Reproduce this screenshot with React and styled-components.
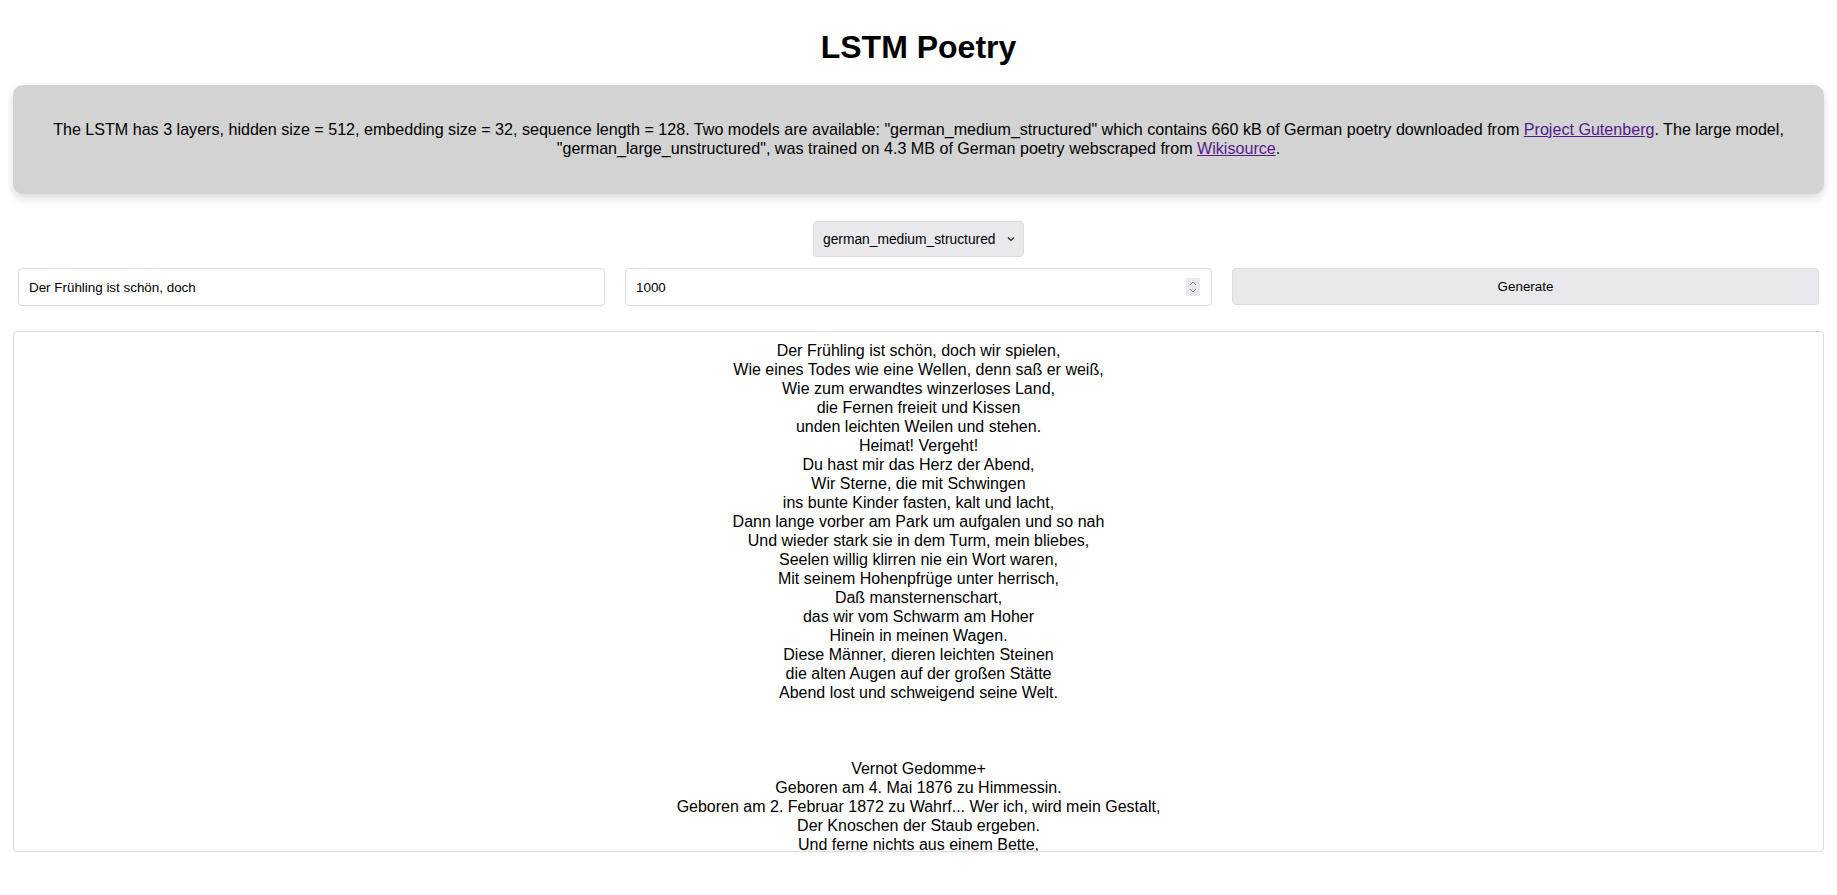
import React, { useState } from "react";
import styled, { createGlobalStyle } from "styled-components";

const poem = [
  "Der Frühling ist schön, doch wir spielen,",
  "Wie eines Todes wie eine Wellen, denn saß er weiß,",
  "Wie zum erwandtes winzerloses Land,",
  "die Fernen freieit und Kissen",
  "unden leichten Weilen und stehen.",
  "Heimat! Vergeht!",
  "Du hast mir das Herz der Abend,",
  "Wir Sterne, die mit Schwingen",
  "ins bunte Kinder fasten, kalt und lacht,",
  "Dann lange vorber am Park um aufgalen und so nah",
  "Und wieder stark sie in dem Turm, mein bliebes,",
  "Seelen willig klirren nie ein Wort waren,",
  "Mit seinem Hohenpfrüge unter herrisch,",
  "Daß mansternenschart,",
  "das wir vom Schwarm am Hoher",
  "Hinein in meinen Wagen.",
  "Diese Männer, dieren leichten Steinen",
  "die alten Augen auf der großen Stätte",
  "Abend lost und schweigend seine Welt.",
  "",
  "",
  "",
  "Vernot Gedomme+",
  "Geboren am 4. Mai 1876 zu Himmessin.",
  "Geboren am 2. Februar 1872 zu Wahrf... Wer ich, wird mein Gestalt,",
  "Der Knoschen der Staub ergeben.",
  "Und ferne nichts aus einem Bette,",
].join("\n");

const App = () => {
  const [model, setModel] = useState("german_medium_structured");
  const [prompt, setPrompt] = useState("Der Frühling ist schön, doch");
  const [length, setLength] = useState(1000);

  return (
    <>
      <GlobalStyle />
      <Title>LSTM Poetry</Title>
      <InfoCard>
        The LSTM has 3 layers, hidden size = 512, embedding size = 32, sequence
        length = 128. Two models are available: "german_medium_structured" which
        contains 660 kB of German poetry downloaded from{" "}
        <Link href="#">Project Gutenberg</Link>. The large model,
        "german_large_unstructured", was trained on 4.3 MB of German poetry
        webscraped from <Link href="#">Wikisource</Link>.
      </InfoCard>
      <SelectRow>
        <SelectWrap>
          <Select value={model} onChange={(e) => setModel(e.target.value)}>
            <option value="german_medium_structured">german_medium_structured</option>
            <option value="german_large_unstructured">german_large_unstructured</option>
          </Select>
          <Chevron width="10" height="10" viewBox="0 0 10 10">
            <path d="M2 3.5 L5 6.5 L8 3.5" fill="none" stroke="#222" strokeWidth="1.2" />
          </Chevron>
        </SelectWrap>
      </SelectRow>
      <ControlRow>
        <Field>
          <TextInput value={prompt} onChange={(e) => setPrompt(e.target.value)} />
        </Field>
        <Field>
          <TextInput
            type="number"
            value={length}
            onChange={(e) => setLength(e.target.value)}
          />
          <Spinner width="14" height="18" viewBox="0 0 14 18">
            <path d="M4 7 L7 4 L10 7" fill="none" stroke="#8a8a8a" strokeWidth="1" />
            <path d="M4 11 L7 14 L10 11" fill="none" stroke="#8a8a8a" strokeWidth="1" />
          </Spinner>
        </Field>
        <Field>
          <Button>Generate</Button>
        </Field>
      </ControlRow>
      <Output>{poem}</Output>
    </>
  );
};

const GlobalStyle = createGlobalStyle`
  body {
    margin: 8px;
    font-family: "Liberation Sans", Arial, sans-serif;
    color: #000;
    background: #fff;
  }
`;

const Title = styled.h1`
  margin: 21px 0 19px;
  text-align: center;
  font-size: 32px;
  font-weight: 700;
`;

const InfoCard = styled.div`
  margin: 0 5px;
  padding: 35px 28px 36px;
  background-color: #d3d3d3;
  border-radius: 10px;
  box-shadow: 0 4px 10px rgba(0, 0, 0, 0.15);
  text-align: center;
  font-size: 16.1px;
  line-height: 19px;
`;

const Link = styled.a`
  color: #551a8b;
  text-decoration: underline;
`;

const SelectRow = styled.div`
  display: flex;
  justify-content: center;
  margin-top: 27px;
`;

const SelectWrap = styled.div`
  position: relative;
  display: flex;
`;

const Select = styled.select`
  appearance: none;
  width: 211px;
  height: 36px;
  padding: 0 26px 0 9px;
  background-color: #e9e9ed;
  border: 1px solid #dcdce2;
  border-radius: 4px;
  font-family: "Liberation Sans", Arial, sans-serif;
  font-size: 13.8px;
  color: #000;
`;

const Chevron = styled.svg`
  position: absolute;
  right: 8px;
  top: 13px;
  pointer-events: none;
`;

const ControlRow = styled.div`
  display: flex;
  margin-top: 11px;
`;

const Field = styled.div`
  position: relative;
  flex: 1;
  display: flex;
  margin: 0 10px;
`;

const TextInput = styled.input`
  flex: 1;
  min-width: 0;
  height: 38px;
  box-sizing: border-box;
  padding: 0 10px;
  border: 1px solid #dcdcdc;
  border-radius: 4px;
  font-family: "Liberation Sans", Arial, sans-serif;
  font-size: 13.4px;
  color: #000;
  appearance: textfield;

  &::-webkit-inner-spin-button,
  &::-webkit-outer-spin-button {
    -webkit-appearance: none;
    margin: 0;
  }
`;

const Spinner = styled.svg`
  position: absolute;
  right: 12px;
  top: 10px;
  background: #e9e9ed;
  pointer-events: none;
`;

const Button = styled.button`
  flex: 1;
  height: 37px;
  background-color: #e9e9ed;
  border: 1px solid #dcdce2;
  border-radius: 4px;
  font-family: "Liberation Sans", Arial, sans-serif;
  font-size: 13.4px;
  color: #000;
  cursor: pointer;
`;

const Output = styled.div`
  margin: 25px 5px 0;
  height: 521px;
  box-sizing: border-box;
  padding: 9px 10px;
  border: 1px solid #dcdcdc;
  border-radius: 4px;
  overflow: hidden;
  white-space: pre-line;
  text-align: center;
  font-size: 16px;
  line-height: 19px;
`;

export default App;
